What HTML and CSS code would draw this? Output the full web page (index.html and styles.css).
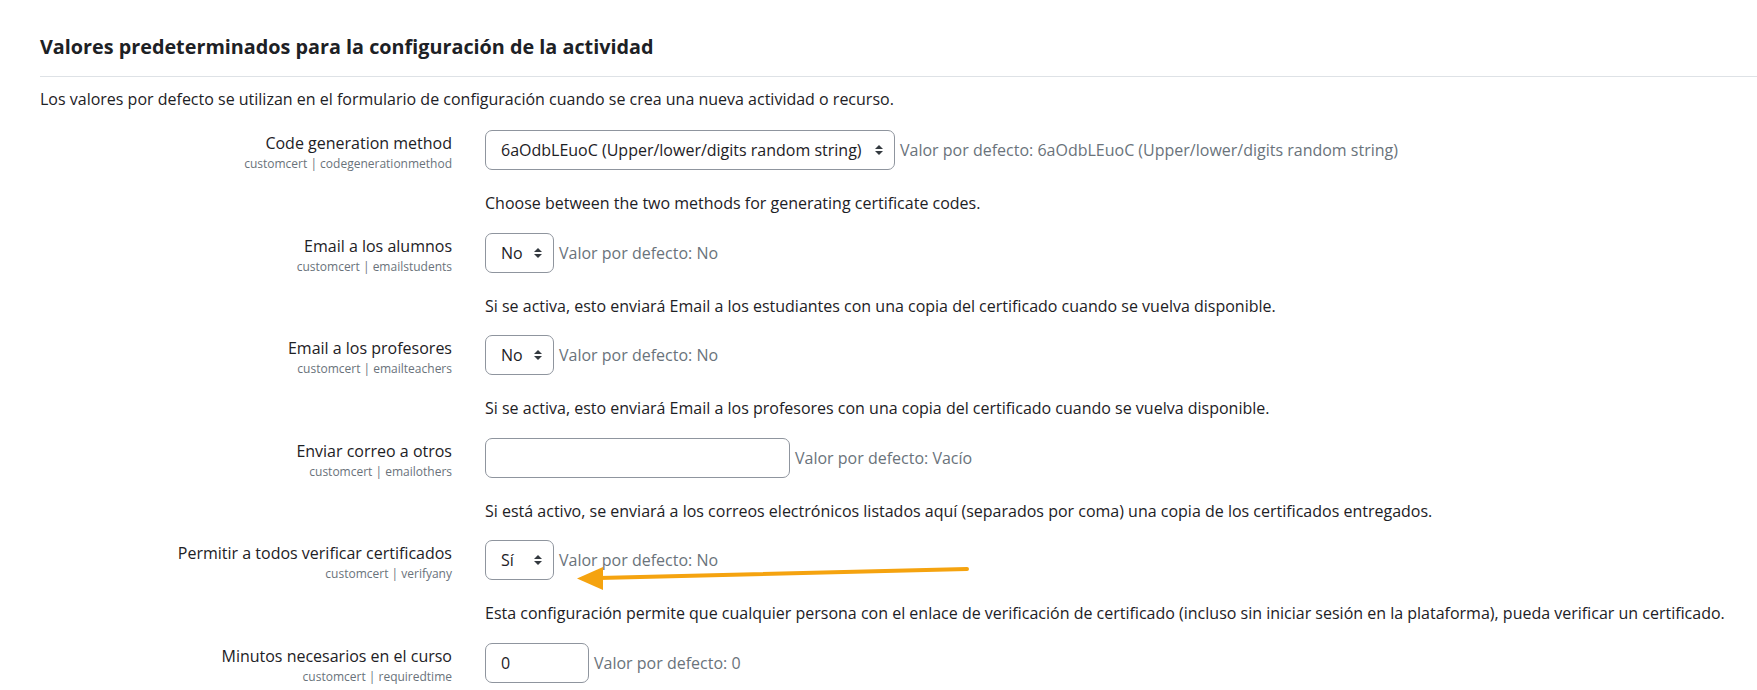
FILE: index.html
```html
<!DOCTYPE html>
<html lang="es">
<head>
<meta charset="utf-8">
<title>Valores predeterminados</title>
<link rel="stylesheet" href="styles.css">
</head>
<body>
<div class="page">
  <h3 class="section-title">Valores predeterminados para la configuración de la actividad</h3>
  <div class="intro">Los valores por defecto se utilizan en el formulario de configuración cuando se crea una nueva actividad o recurso.</div>

  <div class="settings">
    <div class="setting">
      <div class="label-col">
        <div class="label">Code generation method</div>
        <div class="shortname">customcert | codegenerationmethod</div>
      </div>
      <div class="field-col">
        <div class="control-line">
          <div class="select wide"><span>6aOdbLEuoC (Upper/lower/digits random string)</span><svg class="caret" viewBox="0 0 4 5" width="8" height="10"><path d="M2 0L0 2h4zm0 5L0 3h4z" fill="#343a40"/></svg></div>
          <span class="default">Valor por defecto: 6aOdbLEuoC (Upper/lower/digits random string)</span>
        </div>
        <div class="desc">Choose between the two methods for generating certificate codes.</div>
      </div>
    </div>

    <div class="setting">
      <div class="label-col">
        <div class="label">Email a los alumnos</div>
        <div class="shortname">customcert | emailstudents</div>
      </div>
      <div class="field-col">
        <div class="control-line">
          <div class="select small"><span>No</span><svg class="caret" viewBox="0 0 4 5" width="8" height="10"><path d="M2 0L0 2h4zm0 5L0 3h4z" fill="#343a40"/></svg></div>
          <span class="default">Valor por defecto: No</span>
        </div>
        <div class="desc">Si se activa, esto enviará Email a los estudiantes con una copia del certificado cuando se vuelva disponible.</div>
      </div>
    </div>

    <div class="setting">
      <div class="label-col">
        <div class="label">Email a los profesores</div>
        <div class="shortname">customcert | emailteachers</div>
      </div>
      <div class="field-col">
        <div class="control-line">
          <div class="select small"><span>No</span><svg class="caret" viewBox="0 0 4 5" width="8" height="10"><path d="M2 0L0 2h4zm0 5L0 3h4z" fill="#343a40"/></svg></div>
          <span class="default">Valor por defecto: No</span>
        </div>
        <div class="desc">Si se activa, esto enviará Email a los profesores con una copia del certificado cuando se vuelva disponible.</div>
      </div>
    </div>

    <div class="setting">
      <div class="label-col">
        <div class="label">Enviar correo a otros</div>
        <div class="shortname">customcert | emailothers</div>
      </div>
      <div class="field-col">
        <div class="control-line">
          <div class="input text-input"></div>
          <span class="default">Valor por defecto: Vacío</span>
        </div>
        <div class="desc">Si está activo, se enviará a los correos electrónicos listados aquí (separados por coma) una copia de los certificados entregados.</div>
      </div>
    </div>

    <div class="setting">
      <div class="label-col">
        <div class="label">Permitir a todos verificar certificados</div>
        <div class="shortname">customcert | verifyany</div>
      </div>
      <div class="field-col">
        <div class="control-line">
          <div class="select small"><span>Sí</span><svg class="caret" viewBox="0 0 4 5" width="8" height="10"><path d="M2 0L0 2h4zm0 5L0 3h4z" fill="#343a40"/></svg></div>
          <span class="default">Valor por defecto: No</span>
        </div>
        <div class="desc">Esta configuración permite que cualquier persona con el enlace de verificación de certificado (incluso sin iniciar sesión en la plataforma), pueda verificar un certificado.</div>
      </div>
    </div>

    <div class="setting last">
      <div class="label-col">
        <div class="label">Minutos necesarios en el curso</div>
        <div class="shortname">customcert | requiredtime</div>
      </div>
      <div class="field-col">
        <div class="control-line">
          <div class="input num-input"><span>0</span></div>
          <span class="default">Valor por defecto: 0</span>
        </div>
      </div>
    </div>
  </div>

  <svg class="annot-arrow" width="400" height="30" viewBox="0 0 400 30">
    <line x1="22" y1="15" x2="390" y2="6" stroke="#f5a30f" stroke-width="4" stroke-linecap="round"/>
    <polygon points="0,15.5 26,4 26,27" fill="#f5a30f"/>
  </svg>
</div>
</body>
</html>
```
FILE: styles.css
```css
html, body {
  margin: 0;
  padding: 0;
  background: #ffffff;
}
body {
  font-family: "Open Sans", "Noto Sans", "Liberation Sans", sans-serif;
  color: #1d2125;
  font-size: 16px;
}
.page {
  position: relative;
  padding: 30px 0 0 40px;
}
.section-title {
  margin: 0;
  font-size: 19.8px;
  font-weight: 700;
  line-height: 34px;
  padding-bottom: 12px;
  border-bottom: 1px solid #dee2e6;
}
.intro {
  line-height: 22px;
  margin-top: 11px;
}
.settings {
  margin-top: 20px;
}
.setting {
  display: grid;
  grid-template-columns: 412px 1fr;
  column-gap: 33px;
  height: 102.6px;
}
.setting.last {
  height: auto;
}
.label-col {
  text-align: right;
  padding-top: 1px;
}
.label {
  line-height: 24px;
}
.shortname {
  font-size: 12px;
  line-height: 18px;
  color: #6a737b;
}
.control-line {
  display: flex;
  align-items: center;
  gap: 5px;
  height: 40px;
}
.select, .input {
  box-sizing: border-box;
  height: 40px;
  border: 1px solid #8f959e;
  border-radius: 7px;
  display: flex;
  align-items: center;
  padding-left: 15px;
  background: #fff;
}
.select {
  justify-content: space-between;
  padding-right: 11px;
}
.select.wide { width: 410px; }
.select.small { width: 69px; }
.text-input { width: 305px; }
.num-input { width: 104px; }
.caret { flex: none; }
.default {
  color: #6a737b;
}
.desc {
  margin-top: 22px;
  line-height: 22px;
}
.annot-arrow {
  position: absolute;
  left: 577px;
  top: 563px;
}
```
